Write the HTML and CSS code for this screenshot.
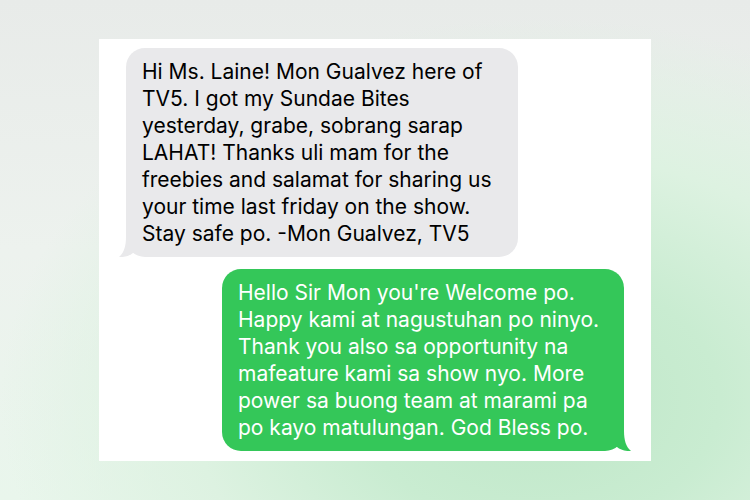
FILE: index.html
```html
<!DOCTYPE html>
<html>
<head>
<meta charset="utf-8">
<link rel="stylesheet" href="styles.css">
</head>
<body>
<div class="page">
  <div class="card">
    <div class="bubble received">
      <p>Hi Ms. Laine! Mon Gualvez here of<br>TV5. I got my Sundae Bites<br>yesterday, grabe, sobrang sarap<br>LAHAT! Thanks uli mam for the<br>freebies and salamat for sharing us<br>your time last friday on the show.<br>Stay safe po. -Mon Gualvez, TV5</p>
      <svg class="tail tail-left" viewBox="0 0 20 20" width="20" height="20"><path d="M20 0 L7 0 C7 9 5 16 0 20 C6 20.5 11 18.5 14 16 L20 16 Z" fill="#e9e9eb"/></svg>
    </div>
    <div class="bubble sent">
      <p>Hello Sir Mon you're Welcome po.<br>Happy kami at nagustuhan po ninyo.<br>Thank you also sa opportunity na<br>mafeature kami sa show nyo. More<br>power sa buong team at marami pa<br>po kayo matulungan. God Bless po.</p>
      <svg class="tail tail-right" viewBox="0 0 20 20" width="20" height="20"><path d="M0 0 L13 0 C13 9 15 16 20 20 C14 20.5 9 18.5 6 16 L0 16 Z" fill="#34c759"/></svg>
    </div>
  </div>
</div>
</body>
</html>
```

FILE: styles.css
```css
html, body {
  margin: 0;
  padding: 0;
}
body {
  width: 750px;
  height: 500px;
  overflow: hidden;
  font-family: "Inter", "Liberation Sans", Arial, sans-serif;
}
.page {
  width: 750px;
  height: 500px;
  padding-top: 39px;
  box-sizing: border-box;
  background:
    radial-gradient(ellipse 80% 85% at 72% 80%, #bfe7c8 0%, #c9ecd1 30%, #ddf2e1 58%, rgba(238,242,239,0) 90%),
    linear-gradient(180deg, #e8ebe9 0%, #edf2ee 50%, #e9f6ec 100%);
}
.card {
  width: 552px;
  height: 422px;
  margin: 0 0 0 99px;
  background: #ffffff;
  box-sizing: border-box;
  padding: 9px 27px 10px 27px;
  display: flex;
  flex-direction: column;
  gap: 12px;
}
.bubble {
  position: relative;
  border-radius: 19px;
  padding: 10px 16px;
  box-sizing: border-box;
}
.bubble p {
  margin: 0;
  font-size: 21px;
  line-height: 27px;
  white-space: nowrap;
}
.received {
  align-self: flex-start;
  width: 392px;
  height: 209px;
  background: #e9e9eb;
  color: #000000;
}
.sent {
  align-self: flex-end;
  width: 402px;
  height: 182px;
  background: #34c759;
  color: #ffffff;
}
.tail {
  position: absolute;
  bottom: 0;
}
.tail-left {
  left: -7px;
}
.tail-right {
  right: -7px;
}
```
